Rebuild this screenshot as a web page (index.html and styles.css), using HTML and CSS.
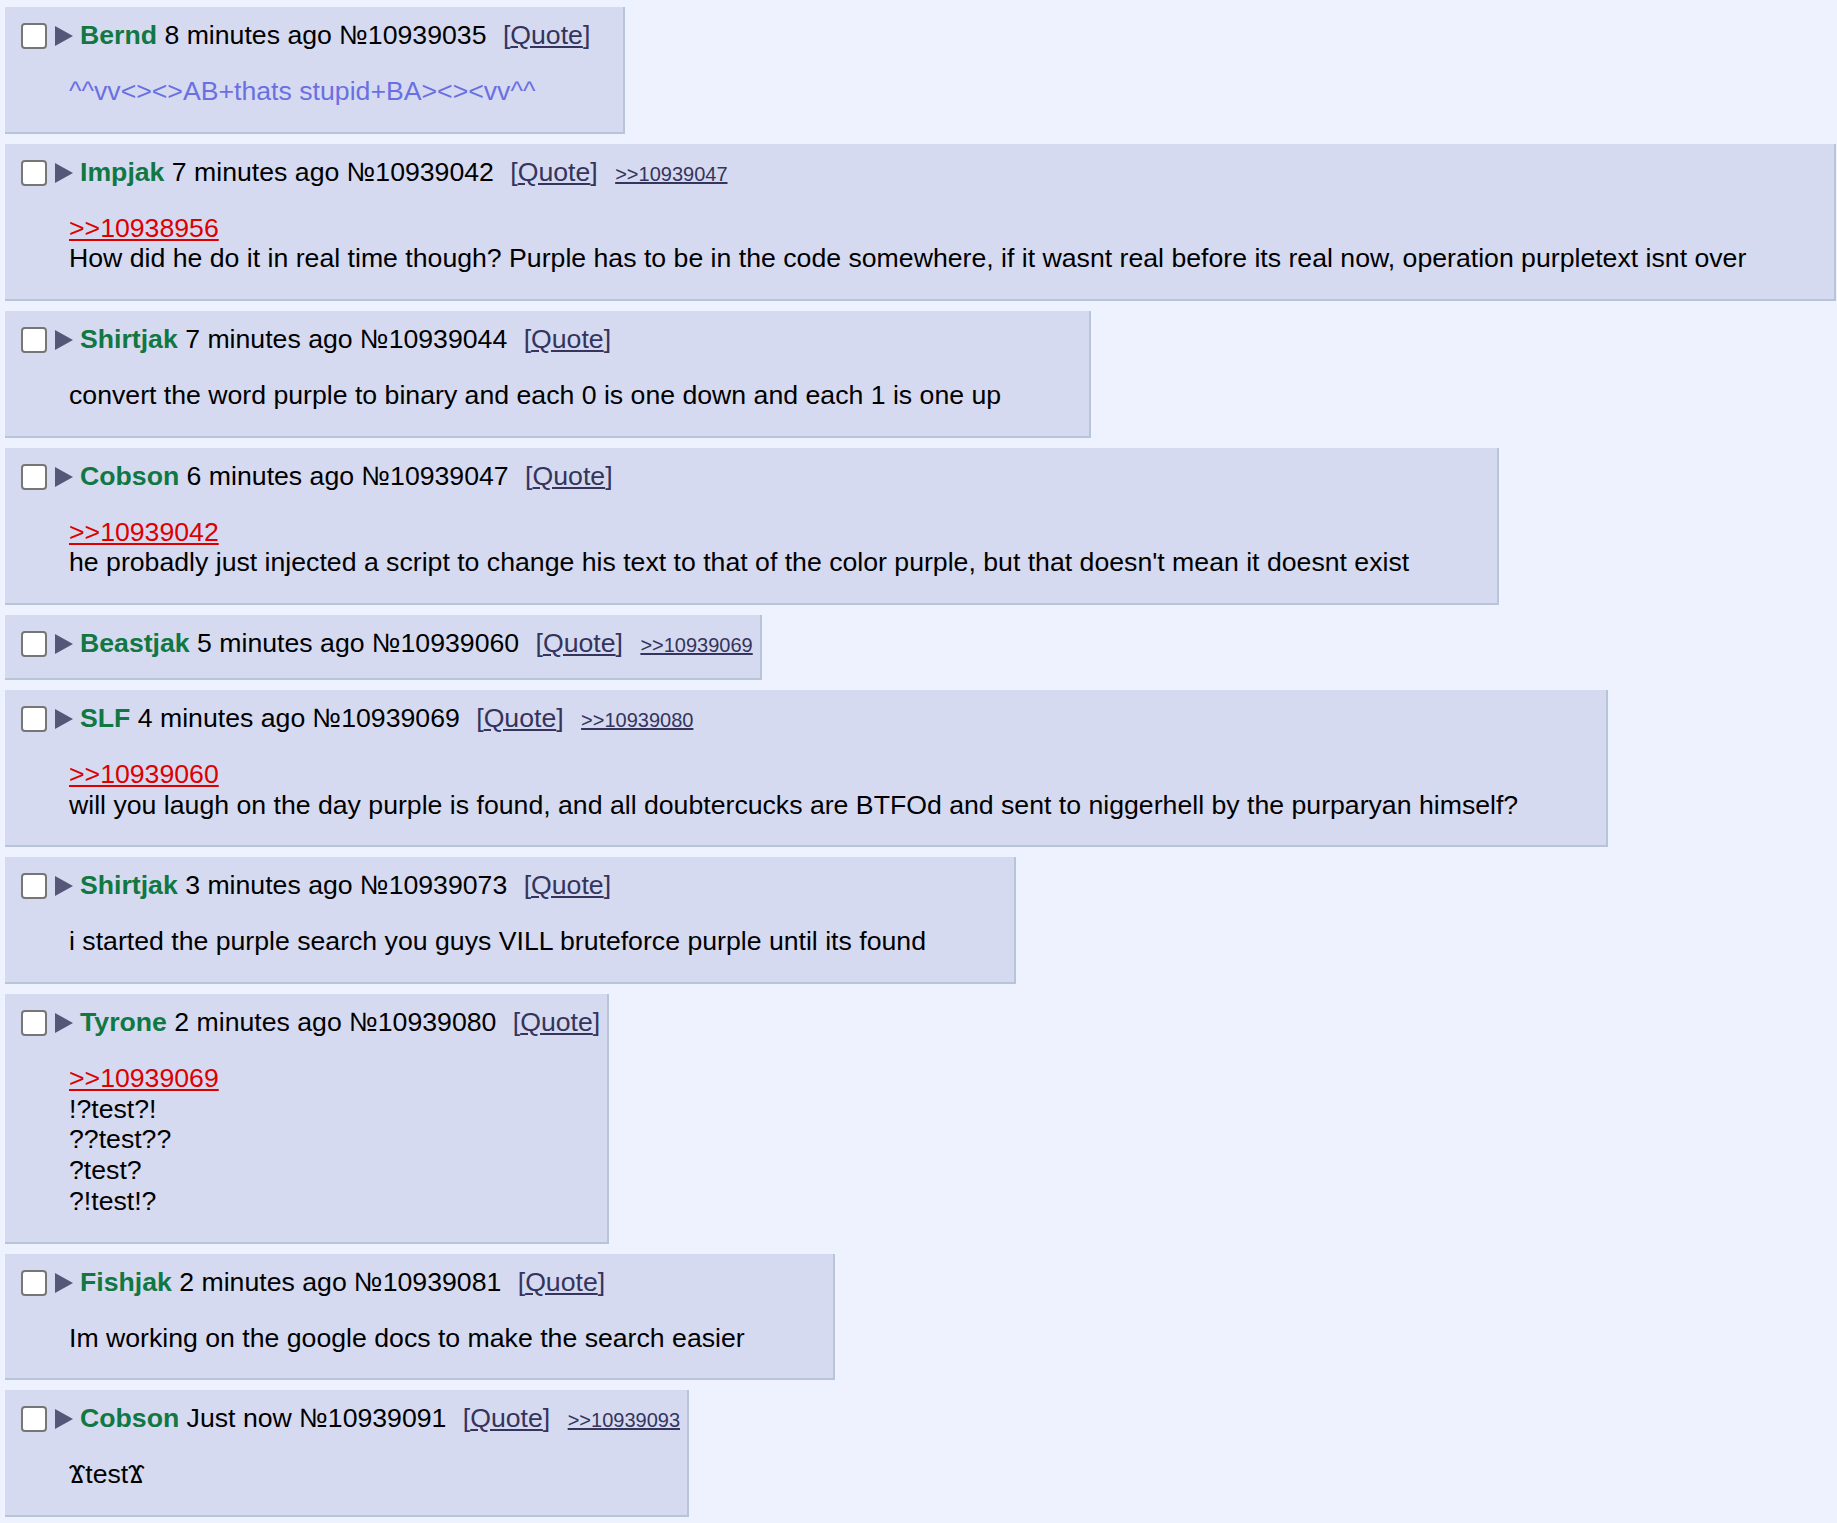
FILE: index.html
```html
<!DOCTYPE html>
<html lang="en">
<head>
    <meta charset="UTF-8">
    <title>Thread</title>
    <link rel="stylesheet" href="styles.css">
</head>
<body>
    <div class="thread">

        <div class="post">
            <div class="post-header">
                <input type="checkbox" class="post-check"><svg class="toggle" viewBox="0 0 18 20"><polygon points="0,0 18,10 0,20"/></svg><span class="name">Bernd</span> 8 minutes ago №10939035 <span class="quote-btn">[<a href="#">Quote</a>]</span>
            </div>
            <div class="message"><span class="purple">^^vv&lt;&gt;&lt;&gt;AB+thats stupid+BA&gt;&lt;&gt;&lt;vv^^</span></div>
        </div>

        <div class="post">
            <div class="post-header">
                <input type="checkbox" class="post-check"><svg class="toggle" viewBox="0 0 18 20"><polygon points="0,0 18,10 0,20"/></svg><span class="name">Impjak</span> 7 minutes ago №10939042 <span class="quote-btn">[<a href="#">Quote</a>]</span> <a href="#" class="backlink">&gt;&gt;10939047</a>
            </div>
            <div class="message">
                <a href="#" class="quotelink">&gt;&gt;10938956</a><br>
                How did he do it in real time though? Purple has to be in the code somewhere, if it wasnt real before its real now, operation purpletext isnt over
            </div>
        </div>

        <div class="post">
            <div class="post-header">
                <input type="checkbox" class="post-check"><svg class="toggle" viewBox="0 0 18 20"><polygon points="0,0 18,10 0,20"/></svg><span class="name">Shirtjak</span> 7 minutes ago №10939044 <span class="quote-btn">[<a href="#">Quote</a>]</span>
            </div>
            <div class="message">convert the word purple to binary and each 0 is one down and each 1 is one up</div>
        </div>

        <div class="post">
            <div class="post-header">
                <input type="checkbox" class="post-check"><svg class="toggle" viewBox="0 0 18 20"><polygon points="0,0 18,10 0,20"/></svg><span class="name">Cobson</span> 6 minutes ago №10939047 <span class="quote-btn">[<a href="#">Quote</a>]</span>
            </div>
            <div class="message">
                <a href="#" class="quotelink">&gt;&gt;10939042</a><br>
                he probadly just injected a script to change his text to that of the color purple, but that doesn't mean it doesnt exist
            </div>
        </div>

        <div class="post">
            <div class="post-header">
                <input type="checkbox" class="post-check"><svg class="toggle" viewBox="0 0 18 20"><polygon points="0,0 18,10 0,20"/></svg><span class="name">Beastjak</span> 5 minutes ago №10939060 <span class="quote-btn">[<a href="#">Quote</a>]</span> <a href="#" class="backlink">&gt;&gt;10939069</a>
            </div>
        </div>

        <div class="post">
            <div class="post-header">
                <input type="checkbox" class="post-check"><svg class="toggle" viewBox="0 0 18 20"><polygon points="0,0 18,10 0,20"/></svg><span class="name">SLF</span> 4 minutes ago №10939069 <span class="quote-btn">[<a href="#">Quote</a>]</span> <a href="#" class="backlink">&gt;&gt;10939080</a>
            </div>
            <div class="message">
                <a href="#" class="quotelink">&gt;&gt;10939060</a><br>
                will you laugh on the day purple is found, and all doubtercucks are BTFOd and sent to niggerhell by the purparyan himself?
            </div>
        </div>

        <div class="post">
            <div class="post-header">
                <input type="checkbox" class="post-check"><svg class="toggle" viewBox="0 0 18 20"><polygon points="0,0 18,10 0,20"/></svg><span class="name">Shirtjak</span> 3 minutes ago №10939073 <span class="quote-btn">[<a href="#">Quote</a>]</span>
            </div>
            <div class="message">i started the purple search you guys VILL bruteforce purple until its found</div>
        </div>

        <div class="post">
            <div class="post-header">
                <input type="checkbox" class="post-check"><svg class="toggle" viewBox="0 0 18 20"><polygon points="0,0 18,10 0,20"/></svg><span class="name">Tyrone</span> 2 minutes ago №10939080 <span class="quote-btn">[<a href="#">Quote</a>]</span>
            </div>
            <div class="message">
                <a href="#" class="quotelink">&gt;&gt;10939069</a><br>
                !?test?!<br>
                ??test??<br>
                ?test?<br>
                ?!test!?
            </div>
        </div>

        <div class="post">
            <div class="post-header">
                <input type="checkbox" class="post-check"><svg class="toggle" viewBox="0 0 18 20"><polygon points="0,0 18,10 0,20"/></svg><span class="name">Fishjak</span> 2 minutes ago №10939081 <span class="quote-btn">[<a href="#">Quote</a>]</span>
            </div>
            <div class="message">Im working on the google docs to make the search easier</div>
        </div>

        <div class="post">
            <div class="post-header">
                <input type="checkbox" class="post-check"><svg class="toggle" viewBox="0 0 18 20"><polygon points="0,0 18,10 0,20"/></svg><span class="name">Cobson</span> Just now №10939091 <span class="quote-btn">[<a href="#">Quote</a>]</span> <a href="#" class="backlink">&gt;&gt;10939093</a>
            </div>
            <div class="message">ϪtestϪ</div>
        </div>

    </div>
</body>
</html>
```

FILE: styles.css
```css
/* Base */
* {
    box-sizing: border-box;
}

body {
    margin: 0;
    padding: 7px 0 20px 5px;
    background-color: #eef2ff;
    color: #000;
    font-family: "Liberation Sans", Arial, sans-serif;
    font-size: 26.67px;
}

/* Thread: posts stacked, each shrinks to its content */
.thread {
    display: flex;
    flex-direction: column;
    align-items: flex-start;
    gap: 10px;
}

.post {
    max-width: 100%;
    background-color: #d6daf0;
    border-right: 2px solid #b7c5d9;
    border-bottom: 2px solid #b7c5d9;
    padding: 12px 7px 18.8px 0;
}

/* Header line */
.post-header {
    height: 32px;
    line-height: 32px;
    white-space: nowrap;
    padding-left: 16px;
}

.post-check {
    appearance: none;
    width: 26px;
    height: 26px;
    margin: 0 8px 0 0;
    vertical-align: -5px;
    background: #fff;
    border: 2px solid #767676;
    border-radius: 4px;
}

.toggle {
    width: 18px;
    height: 20px;
    margin-right: 7px;
    vertical-align: -2px;
    fill: #565679;
}

.name {
    color: #117743;
    font-weight: bold;
}

.quote-btn {
    margin-left: 9px;
    color: #34345c;
}

.quote-btn a,
.backlink {
    color: #34345c;
    text-decoration: underline;
}

.backlink {
    margin-left: 10px;
    font-size: 20px;
}

/* Post body */
.message {
    margin: 25px 81px 6px 64px;
    line-height: 30.8px;
}

.quotelink {
    color: #dd0000;
    text-decoration: underline;
}

.purple {
    color: #6a70e2;
}
```
